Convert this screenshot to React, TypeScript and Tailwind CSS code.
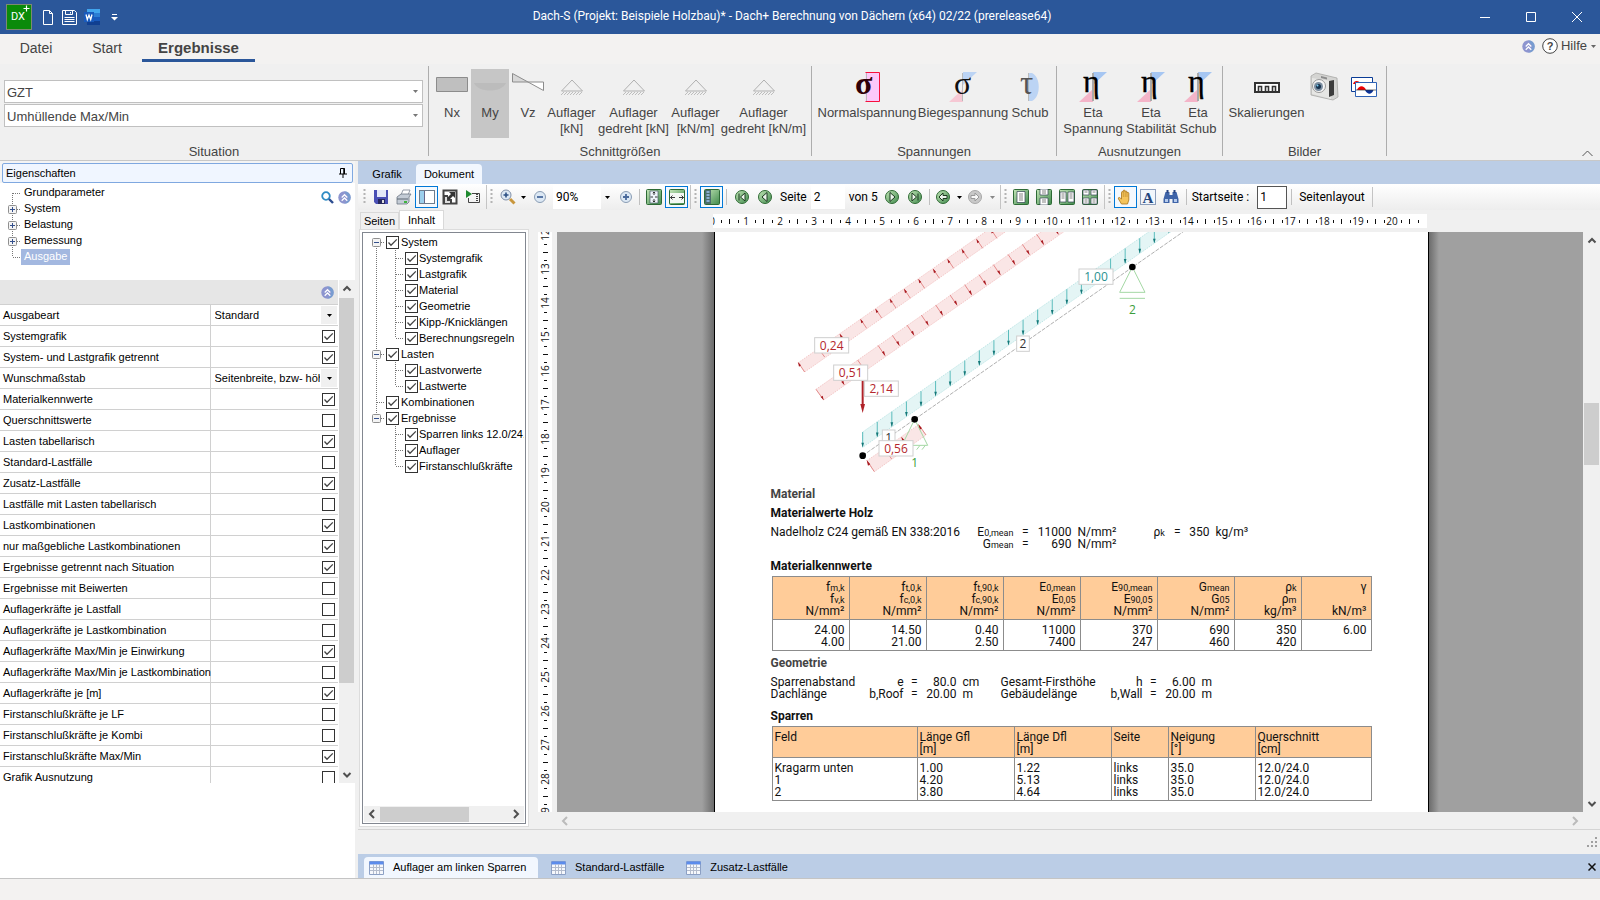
import { Fragment, ReactNode, useState } from 'react';
import clsx from 'clsx';

const arial = "font-['Liberation_Sans',Arial,sans-serif]";
const roboto = 'font-[Roboto,sans-serif]';

/* ---------- shared bits ---------- */

function Check({ id, on, className }: { id: string; on: boolean; className?: string }) {
  const [checked, setChecked] = useState(on);
  return (
    <span className={clsx('relative block h-[13px] w-[13px] shrink-0', className)}>
      <input
        id={id}
        type="checkbox"
        checked={checked}
        onChange={(e) => setChecked(e.target.checked)}
        className="block h-[13px] w-[13px] appearance-none border border-[#333] bg-white"
      />
      {checked && (
        <svg viewBox="0 0 13 13" className="pointer-events-none absolute inset-0 h-[13px] w-[13px]">
          <path d="M2.5 6.5 5 9.2 10.8 3.4" fill="none" stroke="#444" strokeWidth="1.3" />
        </svg>
      )}
    </span>
  );
}

function Collapse({ size = 13 }: { size?: number }) {
  return (
    <svg width={size} height={size} viewBox="0 0 14 14">
      <circle cx="7" cy="7" r="6.7" fill="#8d95cf" />
      <path d="M7 .3A6.7 6.7 0 0 1 7 13.7 10 10 0 0 0 11 7Z" fill="#6f9fd0" opacity=".7" />
      <path d="M4 7 7 4l3 3M4 10.5l3-3 3 3" fill="none" stroke="#fff" strokeWidth="1.3" />
    </svg>
  );
}

function Caret({ className }: { className?: string }) {
  return (
    <svg width="5" height="3" viewBox="0 0 5 3" className={className}>
      <path d="M0 0h5L2.5 3Z" fill="currentColor" />
    </svg>
  );
}

function Chevron({ dir, className }: { dir: 'up' | 'down' | 'left' | 'right'; className?: string }) {
  const paths = {
    up: 'M1.5 6.5 5 3l3.5 3.5',
    down: 'M1.5 3 5 6.5 8.5 3',
    left: 'M7 1 3 5l4 4',
    right: 'M3 1l4 4-4 4',
  };
  return (
    <svg width="10" height="10" viewBox="0 0 10 10" className={className}>
      <path d={paths[dir]} fill="none" stroke="currentColor" strokeWidth="2" />
    </svg>
  );
}

/* ---------- title bar ---------- */

function TitleBar() {
  return (
    <header className={clsx('relative flex h-[34px] shrink-0 items-center bg-[#2b579a] text-white', roboto)}>
      <svg width="26" height="26" viewBox="0 0 26 26" className="ml-1.5 shrink-0">
        <rect x=".5" y=".5" width="25" height="25" fill="#0a8a0a" stroke="#7d8a72" />
        <text x="5" y="16" fontSize="11" fill="#fff" fontFamily="Roboto, sans-serif">DX</text>
        <path d="M20.5 1.5v6M17.500 4.500h6" stroke="#fff" strokeWidth="1.2" />
      </svg>
      <button aria-label="Neu" className="ml-[10px]">
        <svg width="12" height="15" viewBox="0 0 12 15" fill="none" stroke="#fff">
          <path d="M1.500 .5h6l3 3v11h-9ZM7.500 .5v3h3" />
        </svg>
      </button>
      <button aria-label="Speichern" className="ml-2">
        <svg width="15" height="15" viewBox="0 0 15 15" fill="none" stroke="#fff">
          <path d="M.5.5h12l2 2v12H.5ZM3.500.5v4h7v-4M8.500 2v1.500M2.500 7.500h10M2.500 9.500h10M2.500 11.500h10" />
        </svg>
      </button>
      <button aria-label="Word" className="ml-[7px]">
        <svg width="16" height="16" viewBox="0 0 16 16">
          <rect x="3" width="13" height="4" fill="#41a5ee" />
          <rect x="3" y="4" width="13" height="4" fill="#2b7cd3" />
          <rect x="3" y="8" width="13" height="4" fill="#185abd" />
          <rect x="3" y="12" width="13" height="4" fill="#103f91" />
          <rect y="3" width="10" height="10" fill="#185abd" />
          <path d="m2 5.500 1.300 5L5 6l1.700 4.500L8 5.500" fill="none" stroke="#fff" strokeWidth="1.300" />
        </svg>
      </button>
      <button aria-label="Anpassen" className="ml-[11px]">
        <svg width="7" height="7" viewBox="0 0 7 7" fill="#fff">
          <path d="M1 0h5v1H1ZM0 3h7L3.500 6.500Z" />
        </svg>
      </button>
      <h1 className="flex-1 pb-[2px] pl-[4px] text-center text-[12px]">
        Dach-S (Projekt: Beispiele Holzbau)* - Dach+ Berechnung von Dächern (x64) 02/22 (prerelease64)
      </h1>
      <button aria-label="Minimieren" className="flex w-[46px] justify-center">
        <svg width="10" height="10" viewBox="0 0 10 10"><path d="M0 5.500h10" stroke="#fff" /></svg>
      </button>
      <button aria-label="Maximieren" className="flex w-[46px] justify-center">
        <svg width="10" height="10" viewBox="0 0 10 10"><path d="M.5.5h9v9h-9Z" fill="none" stroke="#fff" /></svg>
      </button>
      <button aria-label="Schließen" className="flex w-[46px] justify-center">
        <svg width="10" height="10" viewBox="0 0 10 10"><path d="m0 0 10 10M10 0 0 10" stroke="#fff" /></svg>
      </button>
    </header>
  );
}

/* ---------- ribbon ---------- */

function RibbonButton({ icon, lines, className, active }: { icon: ReactNode; lines: string[]; className: string; active?: boolean }) {
  return (
    <button className={clsx('flex h-[69px] shrink-0 flex-col items-center', className, active && 'bg-[#c6c6c6]')}>
      <span className="flex h-[36px] items-center justify-center">{icon}</span>
      {lines.map((l) => (
        <span key={l} className="text-[13px] leading-4 whitespace-nowrap">{l}</span>
      ))}
    </button>
  );
}

function Group({ title, className, children }: { title: string; className: string; children: ReactNode }) {
  return (
    <section className={clsx('flex h-[90px] shrink-0 flex-col border-r border-[#adadad]', className)}>
      <div className="flex flex-1 items-start pt-[3px]">{children}</div>
      <h2 className="text-center text-[13px] leading-2">{title}</h2>
    </section>
  );
}

const Support = () => (
  <svg width="24" height="20" viewBox="0 0 24 20" fill="none" stroke="#b0b0b0">
    <path d="M12 3 1.500 14h21Z" />
    <path d="m1 18 3-3m0 3 3-3m0 3 3-3m0 3 3-3m0 3 3-3m0 3 3-3m0 3 3-3" strokeWidth=".8" />
  </svg>
);

const Sigma = ({ variant }: { variant: 'normal' | 'bending' }) => (
  <svg width="30" height="30" viewBox="0 0 30 30" className="overflow-visible">
    {variant === 'normal' ? (
      <>
        <path d="M13.500.5h14v29h-14" fill="#fcc8fa" />
        <path d="M13.500.5h14v29h-14" fill="none" stroke="#f8103c" />
      </>
    ) : (
      <>
        <path d="M15 0h14L15 13Z" fill="#bcd4f4" />
        <path d="M15 30H1l14-13Z" fill="#f6c8d4" />
      </>
    )}
    <path d="M14.500 1v28" stroke="#bbb" />
    <text
      x={variant === 'normal' ? 3 : 6}
      y="22"
      fontSize="32"
      fontFamily="Liberation Serif, serif"
      fontWeight={variant === 'normal' ? 700 : 400}
      fill={variant === 'normal' ? '#300008' : '#111'}
    >
      σ
    </text>
  </svg>
);

const Tau = () => (
  <svg width="22" height="30" viewBox="0 0 22 30" className="overflow-visible">
    <path d="M10 1h3c9 4 9 24 0 28h-3Z" fill="#bcd4f4" />
    <path d="M9.500 1v28" stroke="#bbb" />
    <text x="1" y="22" fontSize="33" fontFamily="Liberation Serif, serif" fill="#555">τ</text>
  </svg>
);

const Eta = () => (
  <svg width="30" height="30" viewBox="0 0 30 30" className="overflow-visible">
    <path d="M15 0h14L15 13Z" fill="#a6c6f2" />
    <path d="M15 30H1l14-13Z" fill="#f4b4c8" />
    <path d="M15 1v28" stroke="#aaa" strokeWidth="2" />
    <text x="5" y="20" fontSize="32" fontFamily="Liberation Serif, serif" fill="#000" stroke="#000" strokeWidth=".3">η</text>
  </svg>
);

const Camera = () => (
  <svg width="32" height="30" viewBox="0 0 32 30">
    <path d="M2 4 7 1l21 5 1 19-5 3L2 23Z" fill="#d4d4d2" stroke="#a8a8a6" strokeWidth=".8" />
    <path d="M3 6l19 3v18L3 22Z" fill="#e6e6e4" />
    <path d="m20 9 5-1v15l-5 2Z" fill="#3c3c3c" />
    <circle cx="10" cy="14" r="6.500" fill="#f6f6f6" stroke="#999" />
    <circle cx="9.500" cy="14.500" r="4.500" fill="#7c8ea0" />
    <circle cx="9.500" cy="14.500" r="2.500" fill="#16324e" />
    <circle cx="8.500" cy="13.500" r="1" fill="#7fd0f4" />
    <path d="m12 4 6 1.500v2L12 6Z" fill="#8c8c8c" />
  </svg>
);

function Ribbon() {
  return (
    <div className={clsx('shrink-0 bg-[#f0f0f0] text-[#444]', arial)}>
      <div className="flex h-[30px] items-start bg-[#f3f2f1]">
        <nav className="flex h-7 text-[14px]">
          <a href="#datei" className="flex w-[72px] items-center justify-center">Datei</a>
          <a href="#start" className="flex w-[70px] items-center justify-center">Start</a>
          <a href="#ergebnisse" className="flex w-[113px] items-center justify-center border-b-[3px] border-[#2b579a] pt-[3px] text-[15px] font-bold">
            Ergebnisse
          </a>
        </nav>
        <div className="ml-auto flex h-6 items-center pr-1 text-[13px]">
          <Collapse />
          <button className="ml-[7px] flex items-center gap-[3px]">
            <svg width="16" height="16" viewBox="0 0 16 16">
              <circle cx="8" cy="8" r="7.300" fill="#fff" stroke="#444" />
              <text x="8" y="12" fontSize="11" fontWeight="700" textAnchor="middle" fill="#444" fontFamily="Liberation Sans">?</text>
            </svg>
            Hilfe
            <Caret className="ml-px text-[#666]" />
          </button>
        </div>
      </div>
      <div className="relative flex h-[97px] border-b border-[#c8c8c8] pt-[2px]">
        <Group title="Situation" className="w-[429px]">
          <div className="flex w-full flex-col gap-px pt-[11px] pr-[5px] pl-1">
            {['GZT', 'Umhüllende Max/Min'].map((v) => (
              <div key={v} className="relative">
                <select
                  aria-label={v}
                  defaultValue={v}
                  className="block h-[23px] w-full appearance-none border border-[#c0c0c0] bg-white px-[2px] pt-[2px] text-[13px] outline-none"
                >
                  <option>{v}</option>
                </select>
                <Caret className="pointer-events-none absolute top-[10px] right-[5px] text-[#777]" />
              </div>
            ))}
          </div>
        </Group>
        <Group title="Schnittgrößen" className="w-[383px]">
          <RibbonButton
            className="ml-1 w-[38px]"
            lines={['Nx']}
            icon={
              <svg width="32" height="16" viewBox="0 0 32 16" className="mb-1">
                <path d="M.5.5h31v14H.5Z" fill="#bfbfbf" stroke="#8c8c8c" />
              </svg>
            }
          />
          <RibbonButton
            className="w-[38px]"
            active
            lines={['My']}
            icon={
              <svg width="32" height="10" viewBox="0 0 32 10">
                <path d="M0 1h32c-4 10-28 10-32 0Z" fill="#bcbcbc" />
              </svg>
            }
          />
          <RibbonButton
            className="w-[38px]"
            lines={['Vz']}
            icon={
              <svg width="32" height="18" viewBox="0 0 32 18" className="mb-[10px]">
                <path d="M.5.5v8.500H16Z" fill="#d8d8d8" />
                <path d="M16 9h15.500v8.500Z" fill="#fff" />
                <path d="M.5.5 31.500 17.500V9H.5Z" fill="none" stroke="#8c8c8c" />
              </svg>
            }
          />
          <RibbonButton className="w-[49px]" lines={['Auflager', '[kN]']} icon={<Support />} />
          <RibbonButton className="w-[75px]" lines={['Auflager', 'gedreht [kN]']} icon={<Support />} />
          <RibbonButton className="w-[49px]" lines={['Auflager', '[kN/m]']} icon={<Support />} />
          <RibbonButton className="w-[87px]" lines={['Auflager', 'gedreht [kN/m]']} icon={<Support />} />
        </Group>
        <Group title="Spannungen" className="w-[245px]">
          <RibbonButton className="ml-[6px] w-[98px]" lines={['Normalspannung']} icon={<Sigma variant="normal" />} />
          <RibbonButton className="w-[94px]" lines={['Biegespannung']} icon={<Sigma variant="bending" />} />
          <RibbonButton className="w-[40px]" lines={['Schub']} icon={<Tau />} />
        </Group>
        <Group title="Ausnutzungen" className="w-[166px]">
          <RibbonButton className="ml-[5px] w-[62px]" lines={['Eta', 'Spannung']} icon={<Eta />} />
          <RibbonButton className="w-[54px]" lines={['Eta', 'Stabilität']} icon={<Eta />} />
          <RibbonButton className="w-[40px]" lines={['Eta', 'Schub']} icon={<Eta />} />
        </Group>
        <Group title="Bilder" className="w-[164px]">
          <RibbonButton
            className="ml-[5px] w-[77px]"
            lines={['Skalierungen']}
            icon={
              <svg width="26" height="11" viewBox="0 0 26 11">
                <path d="M1 1h24v9H1Z" fill="#fff" stroke="#333" strokeWidth="2" />
                <path d="M4.500 10V4.500h3V10M11.500 10V4.500h3V10M18.500 10V4.500h3V10" fill="none" stroke="#333" strokeWidth="1.600" />
              </svg>
            }
          />
          <RibbonButton className="w-[40px]" lines={[]} icon={<Camera />} />
          <RibbonButton
            className="w-[38px]"
            lines={[]}
            icon={
              <svg width="26" height="20" viewBox="0 0 26 20">
                <path d="M.5.5h21v14H.5Z" fill="#fff" stroke="#0a3c96" />
                <path d="M2 7c1-4 6-4 8 0Z" fill="#e00" />
                <path d="M4.500 5.500h21v14h-21Z" fill="#fff" stroke="#2f62b4" />
                <path d="M6 13c2-5 7-5 9 0Z" fill="#e00" />
                <path d="M14 13h8.500c-2 5-6 5-8.500 0Z" fill="#0a3296" />
                <path d="M5 13h20" stroke="#333" strokeWidth=".7" />
              </svg>
            }
          />
        </Group>
        <button aria-label="Menüband reduzieren" className="mt-auto mr-[7px] mb-[3px] ml-auto">
          <svg width="11" height="7" viewBox="0 0 11 7"><path d="m.5 6 5-5 5 5" fill="none" stroke="#555" /></svg>
        </button>
      </div>
    </div>
  );
}

/* ---------- trees ---------- */

function Gutter({ up, down, across, box, wide }: { up?: boolean; down?: boolean; across?: boolean; box?: '+' | '-'; wide?: boolean }) {
  return (
    <svg width={wide ? 19 : 16} height="16" viewBox={wide ? '0 0 19 16' : '0 0 16 16'} className="shrink-0">
      <g stroke="#777" strokeDasharray="1 1">
        {up && <path d="M8.500 0v8" />}
        {down && <path d="M8.500 8v8" />}
        {across && <path d="M9 8.500h7" />}
      </g>
      {box && (
        <>
          <rect x="4.500" y="4.500" width="8" height="8" rx="1" fill="#f4f4f4" stroke="#8f8f8f" />
          <path d={box === '+' ? 'M6 8.500h5M8.500 6v5' : 'M6 8.500h5'} stroke="#34508c" />
        </>
      )}
    </svg>
  );
}

const sections = ['Grundparameter', 'System', 'Belastung', 'Bemessung', 'Ausgabe'];

const contents = [
  { name: 'System', items: ['Systemgrafik', 'Lastgrafik', 'Material', 'Geometrie', 'Kipp-/Knicklängen', 'Berechnungsregeln'] },
  { name: 'Lasten', items: ['Lastvorwerte', 'Lastwerte'] },
  { name: 'Kombinationen', items: [] },
  { name: 'Ergebnisse', items: ['Sparren links 12.0/24.', 'Auflager', 'Firstanschlußkräfte'] },
];

/* ---------- properties ---------- */

const props: [string, boolean | string][] = [
  ['Ausgabeart', 'Standard'],
  ['Systemgrafik', true],
  ['System- und Lastgrafik getrennt', true],
  ['Wunschmaßstab', 'Seitenbreite, bzw- höh'],
  ['Materialkennwerte', true],
  ['Querschnittswerte', false],
  ['Lasten tabellarisch', true],
  ['Standard-Lastfälle', false],
  ['Zusatz-Lastfälle', true],
  ['Lastfälle mit Lasten tabellarisch', false],
  ['Lastkombinationen', true],
  ['nur maßgebliche Lastkombinationen', true],
  ['Ergebnisse getrennt nach Situation', true],
  ['Ergebnisse mit Beiwerten', false],
  ['Auflagerkräfte je Lastfall', false],
  ['Auflagerkräfte je Lastkombination', false],
  ['Auflagerkräfte Max/Min je Einwirkung', true],
  ['Auflagerkräfte Max/Min je Lastkombination', false],
  ['Auflagerkräfte je [m]', true],
  ['Firstanschlußkräfte je LF', false],
  ['Firstanschlußkräfte je Kombi', false],
  ['Firstanschlußkräfte Max/Min', true],
  ['Grafik Ausnutzung', false],
];

function Properties() {
  return (
    <aside className={clsx('flex w-[355px] shrink-0 flex-col bg-white text-[11px] text-black', arial)}>
      <div className="bg-[#f4f4f4] px-[2px] pt-[2px]">
        <div className="flex h-5 items-center rounded-xs border border-[#7fa8e0] bg-[#f0f6ff] px-[3px]">
          <h2>Eigenschaften</h2>
          <button aria-label="Anheften" className="mr-[2px] ml-auto">
            <svg width="8" height="10" viewBox="0 0 8 10" fill="none" stroke="#000">
              <path d="M1.500 6V.5h4V6M5.500.5V6M0 6h8M4 6v4" />
              <path d="M5 1v5" strokeWidth="1.500" />
            </svg>
          </button>
        </div>
      </div>
      <div className="flex h-[97px] shrink-0 items-start pt-[2px]">
        <ul className="pl-1">
          {sections.map((s, i) => (
            <li key={s} className="flex h-4 items-center">
              <Gutter up={i > 0} down={i < 4} across box={i > 0 && i < 4 ? '+' : undefined} />
              <span className={clsx('ml-px h-4 px-[3px] leading-[15px]', i === 4 && 'bg-[#a3b8e0] text-white')}>{s}</span>
            </li>
          ))}
        </ul>
        <div className="mt-[6px] mr-[4px] ml-auto flex gap-1">
          <button aria-label="Suchen">
            <svg width="13" height="13" viewBox="0 0 13 13" fill="none">
              <circle cx="5" cy="5" r="3.800" stroke="#2f8cc4" strokeWidth="1.800" />
              <path d="m8 8 4 4" stroke="#2c4c90" strokeWidth="2.400" />
            </svg>
          </button>
          <button aria-label="Zuklappen"><Collapse /></button>
        </div>
      </div>
      <div className="flex h-[503px] shrink-0 overflow-hidden">
        <div className="min-w-0 flex-1">
          <div className="flex h-6 items-center justify-end bg-[#e6e6e6] pr-1">
            <Collapse />
          </div>
          <table className="w-full table-fixed border-collapse">
            <tbody>
              {props.map(([name, value]) => (
                <tr key={name} className="h-[21px] border-t border-[#d0d0d0]">
                  <td className="w-[210px] border-r border-[#d0d0d0] p-0 pl-[3px] leading-5 whitespace-nowrap">
                    <label htmlFor={name}>{name}</label>
                  </td>
                  <td className="p-0 leading-5">
                    {typeof value === 'string' ? (
                      <div className="relative">
                        <select
                          id={name}
                          defaultValue={value}
                          className="block h-5 w-full appearance-none overflow-hidden bg-white pr-[18px] pl-1 outline-none"
                        >
                          <option>{value}</option>
                        </select>
                        <span className="pointer-events-none absolute inset-y-px right-px flex w-4 items-center justify-center bg-[#f0f0f0]">
                          <Caret />
                        </span>
                      </div>
                    ) : (
                      <Check id={name} on={value} className="mr-[3px] ml-auto" />
                    )}
                  </td>
                </tr>
              ))}
            </tbody>
          </table>
        </div>
        <div className="ml-px flex w-4 shrink-0 flex-col items-center bg-[#f0f0f0] text-[#505050]">
          <Chevron dir="up" className="my-[4px] mr-px shrink-0" />
          <div className="mr-px h-[385px] w-[15px] bg-[#cdcdcd]" />
          <Chevron dir="down" className="mt-auto mr-px mb-[3px] shrink-0" />
        </div>
      </div>
    </aside>
  );
}

/* ---------- toolbar ---------- */

const Grip = () => (
  <svg width="3" height="16" viewBox="0 0 3 16" className="mx-[3px] shrink-0">
    <path d="M1.500 0v16" stroke="#b4b4b4" strokeWidth="2" strokeDasharray="2 2" />
  </svg>
);

const Sep = () => <span className="mx-[2px] h-4 w-px shrink-0 bg-[#c0c0c0]" />;
const End = () => <span className="ml-[2px] h-6 w-px shrink-0 bg-[#c4c4c4]" />;

function Tool({ name, active, children }: { name: string; active?: boolean; children: ReactNode }) {
  return (
    <button
      aria-label={name}
      className={clsx(
        'flex h-[22px] w-[23px] shrink-0 items-center justify-center border',
        active ? 'border-[#0078d7] bg-[#f4f9fe]' : 'border-transparent',
      )}
    >
      <svg width="16" height="16" viewBox="0 0 16 16">{children}</svg>
    </button>
  );
}

const GreenSquare = () => <rect x=".5" y=".5" width="15" height="15" rx="1" fill="url(#green)" stroke="#2d6a35" />;
const Round = ({ d, gray }: { d: string; gray?: boolean }) => (
  <>
    <circle cx="8" cy="8" r="6.500" fill={gray ? '#c8c8c8' : 'url(#green)'} stroke={gray ? '#a8a8a8' : '#2f6a34'} />
    <path d={d} fill="#fff" fillOpacity=".85" stroke={gray ? '#999' : '#1d3a20'} />
  </>
);
const Lens = ({ plus }: { plus?: boolean }) => (
  <>
    <circle cx="8" cy="8" r="5.500" fill="#dce8f4" stroke="#8a9db4" />
    <path d={plus ? 'M5 8h6M8 5v6' : 'M5 8h6'} stroke="#4a6a9c" strokeWidth="1.800" />
  </>
);

function Toolbar() {
  return (
    <div className={clsx('flex h-[26px] shrink-0 items-center overflow-hidden bg-linear-to-b from-white to-[#ededed] pl-[2px] text-[12px] whitespace-nowrap text-black', roboto)}>
      <svg className="absolute h-0 w-0">
        <defs>
          <linearGradient id="green" x1="0" y1="0" x2="1" y2="1">
            <stop offset="0" stopColor="#c4e6b8" />
            <stop offset="1" stopColor="#3f8a4c" />
          </linearGradient>
        </defs>
      </svg>
      <Grip />
      <Tool name="Speichern">
        <path d="M1 1h14v14H3l-2-2Z" fill="#4a4fb4" />
        <path d="M4 1h9v7H4Z" fill="#e4e8f8" />
        <path d="M5 10h7v5H5Z" fill="#26285e" />
        <path d="M9 11h2v3H9Z" fill="#ddd" />
      </Tool>
      <Tool name="Drucken">
        <path d="M5 6 7 1h7l-2 5Z" fill="#fff" stroke="#7d8794" strokeWidth=".8" />
        <path d="m1 8 4-3h10l-2 3v5l-2 2H1Z" fill="#c4ccd6" stroke="#6c7684" strokeWidth=".8" />
        <path d="M1 10h11" stroke="#5b6470" />
        <path d="M8 12h3v2H8Z" fill="#3fb43f" />
      </Tool>
      <Tool name="Navigation" active>
        <rect x=".5" y="1.500" width="15" height="13" fill="#fff" stroke="#6f7d8c" />
        <rect x="1" y="2" width="4" height="12" fill="#9ccfec" />
        <path d="M5.500 2v12" stroke="#668" />
      </Tool>
      <Tool name="Vollbild">
        <path d="M1.500 1.500h13v13h-13Z" fill="#fff" stroke="#444" strokeWidth="2" />
        <path d="M1 6h5v4h4v5H1Z" fill="#444" />
        <path d="M3 8h2v4h3v2H3Z" fill="#ddd" />
        <path d="M7 3h6v6l-2-2-4 4-2-2 4-4Z" fill="#333" />
      </Tool>
      <Tool name="Export">
        <path d="m1 1 6 4-6 4Z" fill="#1f8a2f" />
        <path d="M3.500 9v4.500H7M7 4.500h7.500v9H7" fill="none" stroke="#444" />
        <path d="M12 5v8" stroke="#444" strokeWidth="2" strokeDasharray="1 1" />
      </Tool>
      <End />
      <Grip />
      <Tool name="Vergrößern">
        <circle cx="6" cy="6" r="5" fill="#dce8f4" stroke="#8090a8" />
        <path d="M3.500 6h5M6 3.500v5" stroke="#2b4f84" strokeWidth="1.600" />
        <path d="m10 10 4.500 4.500" stroke="#c8963c" strokeWidth="3" />
      </Tool>
      <Caret className="mx-[2px] shrink-0" />
      <Tool name="Verkleinern"><Lens /></Tool>
      <input aria-label="Zoom" defaultValue="90%" className="ml-[2px] h-6 w-[48px] shrink-0 bg-white pl-[3px] outline-none" />
      <Caret className="mx-1 shrink-0" />
      <Tool name="Plus"><Lens plus /></Tool>
      <span className="mx-[2px] h-4 w-px shrink-0 bg-[#c0c0c0]" />
      <Tool name="Ganze Seite">
        <GreenSquare />
        <rect x="4" y="2" width="8" height="12" fill="#eef4fa" stroke="#345" strokeWidth=".6" />
        <path d="M8 3v3M8 10v3M4.500 8H7m2 0h2.500M6.800 4.200 8 3l1.200 1.200M6.800 11.800 8 13l1.200-1.200" fill="none" stroke="#222" strokeWidth=".9" />
      </Tool>
      <Tool name="Seitenbreite" active>
        <GreenSquare />
        <rect x="1" y="4" width="14" height="10" fill="#f4f8f4" />
        <path d="M1.500 8.500H6m4 0h4.500M3.500 6.500l-2 2 2 2m9-4 2 2-2 2" fill="none" stroke="#222" strokeWidth=".9" />
      </Tool>
      <End />
      <Grip />
      <Tool name="Miniaturen" active>
        <GreenSquare />
        <path d="M1 1h6v14H1Z" fill="#4c6c6c" />
        <path d="M2.500 3h3M2.500 6h3M2.500 9h3M2.500 12h3" stroke="#9cc4f0" strokeWidth="1.500" />
      </Tool>
      <span className="mx-[3px] h-4 w-px shrink-0 bg-[#c0c0c0]" />
      <Tool name="Erste Seite"><Round d="M5 4.500v7M11 4v8L6.500 8Z" /></Tool>
      <Tool name="Vorige Seite"><Round d="M10 3.500v9L5 8Z" /></Tool>
      <label htmlFor="seite" className="ml-1">Seite</label>
      <input id="seite" defaultValue="2" className="ml-1 h-6 w-[34px] shrink-0 bg-white pl-[3px] outline-none" />
      <span className="mr-[3px] ml-1">von 5</span>
      <Tool name="Nächste Seite"><Round d="M6 3.500v9L11 8Z" /></Tool>
      <Tool name="Letzte Seite"><Round d="M5 4v8l4.500-4ZM11 4.500v7" /></Tool>
      <Sep />
      <Tool name="Zurück"><Round d="M4 8l4-4v2.500h4v3H8V12Z" /></Tool>
      <Caret className="mx-[2px] shrink-0" />
      <Tool name="Vor"><Round gray d="M12 8 8 4v2.500H4v3h4V12Z" /></Tool>
      <Caret className="ml-[3px] shrink-0 text-[#888]" />
      <span className="w-[3px]" />
      <End />
      <Grip />
      <Tool name="Einzelseite">
        <GreenSquare />
        <path d="M4 2.500h8v11H4Z" fill="#fff" stroke="#345" strokeWidth=".7" />
        <path d="M6 5h4M6 7h4M6 9h4M6 11h4" stroke="#666" strokeWidth=".8" />
      </Tool>
      <Tool name="Fortlaufend">
        <GreenSquare />
        <path d="M4 0h8v6H4ZM4 9h8v7H4Z" fill="#fff" stroke="#345" strokeWidth=".7" />
        <path d="M6 2h4M6 4h4M6 11h4M6 13h4" stroke="#666" strokeWidth=".8" />
      </Tool>
      <Tool name="Doppelseite">
        <GreenSquare />
        <path d="M1 3h6v10H1ZM9 3h6v10H9Z" fill="#fff" stroke="#345" strokeWidth=".7" />
        <path d="M2.500 5h3m-3 2h3m-3 2h3m5-4h3m-3 2h3m-3 2h3" stroke="#666" strokeWidth=".8" />
      </Tool>
      <Tool name="Doppelseite fortlaufend">
        <GreenSquare />
        <path d="M1 1h6v5H1ZM9 1h6v5H9ZM1 9h6v6H1ZM9 9h6v6H9Z" fill="#fff" stroke="#345" strokeWidth=".7" />
        <path d="M2.500 3h3m5 0h3m-11 8h3m-3 2h3m5-2h3m-3 2h3" stroke="#666" strokeWidth=".8" />
      </Tool>
      <End />
      <Grip />
      <Tool name="Hand" active>
        <path
          d="M4.500 15 1.500 10c-.7-1.500.8-2.200 1.700-1L4.500 10V3.500c0-1.300 1.700-1.300 1.700 0V2c0-1.300 1.800-1.300 1.800 0v.7c.2-1.200 1.900-1 1.900.3V4c.3-1 1.900-.8 1.900.4V11l-1.300 4Z"
          fill="#f4c45c"
          stroke="#a87418"
          strokeWidth=".8"
        />
        <path d="M6.300 4v4M8.200 3v5M10 4v4" stroke="#b88424" strokeWidth=".6" />
      </Tool>
      <Tool name="Textauswahl">
        <path d="M.5.5h15v15H.5Z" fill="#f2f6fb" stroke="#24457c" strokeDasharray="1 1" />
        <text x="2.500" y="13.500" fontSize="15" fontWeight="700" fontFamily="Liberation Serif, serif" fill="#24457c">A</text>
      </Tool>
      <Tool name="Suchen">
        <path d="M2.500 3h4v3h3V3h4l2 7v4h-6v-4h-3v4h-6v-4Z" fill="#3f64a8" />
        <path d="M3.500 1h2v3h-2ZM10.500 1h2v3h-2Z" fill="#2a4784" />
        <path d="M2 10h3v3H2ZM11 10h3v3h-3Z" fill="#b4caec" />
      </Tool>
      <span className="mr-[5px] ml-[3px] h-4 w-px shrink-0 bg-[#c0c0c0]" />
      <label htmlFor="startseite">Startseite :</label>
      <input id="startseite" defaultValue="1" className="ml-2 h-[23px] w-[30px] shrink-0 border border-[#555] bg-white pl-[2px] outline-none" />
      <span className="mr-[7px] ml-1 h-4 w-px shrink-0 bg-[#c0c0c0]" />
      <button>Seitenlayout</button>
      <span className="ml-[7px] h-5 w-px shrink-0 bg-[#c4c4c4]" />
    </div>
  );
}

/* ---------- contents pane ---------- */

function Contents() {
  return (
    <div className={clsx('flex w-[173px] shrink-0 flex-col pr-[2px] pb-[2px] pl-px text-[11px]', arial)}>
      <div className="flex h-[19px] items-end pl-px">
        <button className="h-[17px] w-[39px] border border-b-0 border-[#d9d9d9] bg-[#f0f0f0] leading-[15px]">Seiten</button>
        <button className="h-[19px] w-[45px] border border-b-0 border-[#d9d9d9] bg-white leading-[15px]">Inhalt</button>
      </div>
      <div className="flex min-h-0 flex-1 flex-col border border-[#dcdcdc] bg-white p-[2px]">
        <div className="flex min-h-0 flex-1 flex-col border border-[#828790] p-px">
          <ul className="min-h-0 flex-1 overflow-hidden pl-1">
            {contents.map((c, i) => (
              <Fragment key={c.name}>
                <li className="flex h-4 items-center">
                  <Gutter up={i > 0} down={i < 3} across box={c.items.length ? '-' : undefined} />
                  <Check id={`c-${c.name}`} on className="ml-[2px]" />
                  <label htmlFor={`c-${c.name}`} className="ml-[2px] leading-4">{c.name}</label>
                </li>
                {c.items.map((item, k) => (
                  <li key={item} className="flex h-4 items-center">
                    <Gutter wide up={i < 3} down={i < 3} />
                    <Gutter up down={k < c.items.length - 1} across />
                    <Check id={`c-${item}`} on className="ml-[2px]" />
                    <label htmlFor={`c-${item}`} className="ml-px leading-4 whitespace-nowrap">{item}</label>
                  </li>
                ))}
              </Fragment>
            ))}
          </ul>
          <div className="flex h-4 items-center bg-[#f0f0f0] text-[#505050]">
            <Chevron dir="left" className="mx-[3px]" />
            <div className="h-[15px] w-[89px] bg-[#cdcdcd]" />
            <Chevron dir="right" className="mr-[3px] ml-auto" />
          </div>
        </div>
      </div>
    </div>
  );
}

/* ---------- rulers ---------- */

const CM = 34;

function HRuler() {
  return (
    <svg width="714" height="14" viewBox="0 0 714 14" className="shrink-0 bg-white">
      {Array.from({ length: 21 }, (_, n) => (
        <g key={n}>
          <text x={n * CM - 1} y="11" fontSize="10" textAnchor="middle" fontFamily="Open Sans, sans-serif" fill="#111">{n}</text>
          <path d={`M${n * CM + 8.5} 6v3M${n * CM + 16.5} 5v5M${n * CM + 25.5} 6v3`} stroke="#111" />
        </g>
      ))}
    </svg>
  );
}

function VRuler() {
  return (
    <svg width="14" height="580" viewBox="0 0 14 580" className="mt-1 ml-px shrink-0 bg-white">
      {Array.from({ length: 18 }, (_, k) => {
        const y = 3 + k * CM;
        return (
          <g key={k}>
            <text transform={`translate(11 ${y}) rotate(-90)`} fontSize="10" textAnchor="middle" fontFamily="Open Sans, sans-serif" fill="#111">
              {12 + k}
            </text>
            <path d={`M6 ${y + 9.5}h3M5 ${y + 17.5}h5M6 ${y + 25.5}h3`} stroke="#111" />
          </g>
        );
      })}
    </svg>
  );
}

/* ---------- roof drawing ---------- */

const upliftX = [482, 527, 570, 613, 656, 700, 743, 786, 830, 873];
const windX = [555, 598, 642, 685, 728, 771, 815, 858, 901, 945, 988, 1031, 1075, 1118];

function Tag({ x, y, w, text, color }: { x: number; y: number; w: number; text: string; color: string }) {
  return (
    <g>
      <rect x={x} y={y} width={w} height="46" fill="#fff" stroke="#cfcfcf" strokeWidth="3" />
      <text x={x + w / 2} y={y + 36} fontSize="36" textAnchor="middle" fill={color} fontFamily="Open Sans, sans-serif">{text}</text>
    </g>
  );
}

function RoofDrawing() {
  return (
    <svg width="713" height="250" viewBox="45 66 2139 750" className="block shrink-0">
      <g fill="#fae6e6" stroke="#eeb4b4" strokeWidth="2" strokeDasharray="4 3">
        <path d="M295 458 1000-35l20 28L314 486Z" />
        <path d="M348 538 1200-58l22 32L371 570Z" />
        <path d="m501 752 155-108 22 31-155 110Z" />
      </g>
      <path d="M488 666 1600-112v46L488 712Z" fill="#e4f5f5" stroke="#a8dcdc" strokeWidth="2" strokeDasharray="4 3" />
      <path d="M488 737 1480 44" stroke="#b0b0b0" strokeWidth="3" strokeDasharray="12 4" />
      <g stroke="#e48c8c" strokeWidth="3">
        <path d="m295 458 19 28M420 372l18 26M355 415l19 26M348 538l23 32M473 450l22 32M412 494l21 30M501 752l22 33M656 644l22 31M605 682l22 31M553 716l22 31" />
        {upliftX.map((x) => {
          const y = 328 - (x - 482) * 0.69;
          return <path key={x} d={`M${x} ${y}l18 27`} />;
        })}
        {windX.map((x) => {
          const y = 437 - (x - 555) * 0.7;
          return <path key={x} d={`M${x} ${y}l-21 -31`} />;
        })}
      </g>
      <g fill="#a81a20">
        <path d="m294 457 9 9-6 4ZM419 371l9 9-6 4ZM371 570l-9-9 6-4ZM433 525l-9-9 6-4ZM500 751l11 12-7 4ZM655 643l11 12-7 4ZM604 681l9 9-6 4Z" />
        {upliftX.map((x) => {
          const y = 328 - (x - 482) * 0.69;
          return <path key={x} d={`M${x - 1} ${y - 1}l9 9-6 4Z`} />;
        })}
        {windX.map((x) => {
          const y = 437 - (x - 555) * 0.7;
          return <path key={x} d={`M${x + 1} ${y + 1}l-10 -11 6 -4Z`} />;
        })}
      </g>
      {Array.from({ length: 22 }, (_, i) => {
        const x = 488 + i * 43.75;
        const y = 666 - i * 30.6;
        return (
          <g key={i}>
            <path d={`M${x} ${y}v44`} stroke="#5cbcbc" strokeWidth="3" />
            <path d={`M${x - 4} ${y + 32}h8l-4 14Z`} fill="#147878" />
          </g>
        );
      })}
      <g fill="none" stroke="#a4d8a4" strokeWidth="3">
        <path d="m1297 171-38 76h76ZM1259 265h76" />
        <path d="m644 628-38 78h77ZM660 706l-10 13M676 706l-10 13" />
      </g>
      <path d="M488 512v80" stroke="#b02228" strokeWidth="6" />
      <path d="M481 582h14l-7 27Z" fill="#b02228" />
      <g fill="#000">
        <circle cx="488" cy="737" r="10" />
        <circle cx="644" cy="628" r="10" />
        <circle cx="1297" cy="171" r="10" />
      </g>
      <Tag x={344} y={383} w={102} text="0,24" color="#b4282d" />
      <Tag x={493} y={513} w={102} text="2,14" color="#b4282d" />
      <Tag x={401} y={465} w={102} text="0,51" color="#b4282d" />
      <Tag x={1137} y={177} w={102} text="1,00" color="#2a9090" />
      <Tag x={950} y={378} w={38} text="2" color="#333" />
      <Tag x={547} y={660} w={38} text="1" color="#333" />
      <Tag x={537} y={692} w={102} text="0,56" color="#b4282d" />
      <g fontSize="36" textAnchor="middle" fill="#3c9e3c" fontFamily="Open Sans, sans-serif">
        <text x="1297" y="312">2</text>
        <text x="644" y="770">1</text>
      </g>
    </svg>
  );
}

/* ---------- document ---------- */

function Sym({ s, sub }: { s: string; sub?: string }) {
  return (
    <>
      {s}
      {sub && <span className="text-[9px]">{sub}</span>}
    </>
  );
}

const materialCols: { head: [string, string?][]; unit: string; values: string[]; w: string }[] = [
  { head: [['f', 'm,k'], ['f', 'v,k']], unit: 'N/mm²', values: ['24.00', '4.00'], w: 'w-[77px]' },
  { head: [['f', 't,0,k'], ['f', 'c,0,k']], unit: 'N/mm²', values: ['14.50', '21.00'], w: 'w-[77px]' },
  { head: [['f', 't,90,k'], ['f', 'c,90,k']], unit: 'N/mm²', values: ['0.40', '2.50'], w: 'w-[77px]' },
  { head: [['E', '0,mean'], ['E', '0,05']], unit: 'N/mm²', values: ['11000', '7400'], w: 'w-[77px]' },
  { head: [['E', '90,mean'], ['E', '90,05']], unit: 'N/mm²', values: ['370', '247'], w: 'w-[77px]' },
  { head: [['G', 'mean'], ['G', '05']], unit: 'N/mm²', values: ['690', '460'], w: 'w-[77px]' },
  { head: [['ρ', 'k'], ['ρ', 'm']], unit: 'kg/m³', values: ['350', '420'], w: 'w-[67px]' },
  { head: [['γ'], ['\u00a0']], unit: 'kN/m³', values: ['6.00', '\u00a0'], w: 'w-[70px]' },
];

const rafterHead: [string, string, string][] = [
  ['Feld', '', 'w-[145px]'],
  ['Länge Gfl', '[m]', 'w-[97px]'],
  ['Länge Dfl', '[m]', 'w-[97px]'],
  ['Seite', '', 'w-[57px]'],
  ['Neigung', '[°]', 'w-[87px]'],
  ['Querschnitt', '[cm]', 'w-[116px]'],
];

const rafters = [
  ['Kragarm unten', '1.00', '1.22', 'links', '35.0', '12.0/24.0'],
  ['1', '4.20', '5.13', 'links', '35.0', '12.0/24.0'],
  ['2', '3.80', '4.64', 'links', '35.0', '12.0/24.0'],
];

function Page() {
  return (
    <article className={clsx('flex w-[715px] shrink-0 flex-col border-x border-black bg-white text-[12px] leading-3 text-[#111]', roboto)}>
      <RoofDrawing />
      <div className="pt-[6px] pl-[56px]">
        <h3 className="font-bold text-[#444]">Material</h3>
        <h4 className="mt-[7px] font-bold">Materialwerte Holz</h4>
        <div className="mt-[7px] flex">
          <span className="w-[200px]">Nadelholz C24 gemäß EN 338:2016</span>
          <div className="grid auto-rows-[12px] grid-cols-[43px_16px_42px_82px_12px_16px_28px_60px] text-right">
            <span><Sym s="E" sub="0,mean" /></span><span className="pr-px">=</span><span>11000</span><span className="pl-[6px] text-left">N/mm²</span>
            <span className="text-left"><Sym s="ρ" sub="k" /></span><span className="pr-px">=</span><span>350</span><span className="pl-[6px] text-left">kg/m³</span>
            <span><Sym s="G" sub="mean" /></span><span className="pr-px">=</span><span>690</span><span className="pl-[6px] text-left">N/mm²</span>
          </div>
        </div>
        <h4 className="mt-[10px] font-bold">Materialkennwerte</h4>
        <table className="mt-[4px] ml-px w-[600px] table-fixed border-collapse border border-[#8c8c8c] text-right">
          <thead>
            <tr className="bg-[#ffcc99]">
              {materialCols.map((c, i) => (
                <th key={i} className={clsx('border border-[#8c8c8c] pt-1 pr-1 pb-[2px] pl-0 font-normal', c.w)}>
                  {c.head.map(([s, sub], k) => (
                    <div key={k} className="h-3"><Sym s={s} sub={sub} /></div>
                  ))}
                  <div className="h-3">{c.unit}</div>
                </th>
              ))}
            </tr>
          </thead>
          <tbody>
            <tr>
              {materialCols.map((c, i) => (
                <td key={i} className="border border-[#8c8c8c] pt-1 pr-1 pb-[2px] pl-0">
                  {c.values.map((v, k) => <div key={k}>{v}</div>)}
                </td>
              ))}
            </tr>
          </tbody>
        </table>
        <h3 className="mt-[6px] font-bold text-[#444]">Geometrie</h3>
        <div className="mt-[7px] grid grid-cols-[86px_47px_14px_39px_44px_86px_56px_14px_39px_40px] text-right whitespace-nowrap">
          <span className="text-left">Sparrenabstand</span><span>e</span><span>=</span><span>80.0</span><span className="pl-[6px] text-left">cm</span>
          <span className="text-left">Gesamt-Firsthöhe</span><span>h</span><span>=</span><span>6.00</span><span className="pl-[6px] text-left">m</span>
          <span className="text-left">Dachlänge</span><span>b,Roof</span><span>=</span><span>20.00</span><span className="pl-[6px] text-left">m</span>
          <span className="text-left">Gebäudelänge</span><span>b,Wall</span><span>=</span><span>20.00</span><span className="pl-[6px] text-left">m</span>
        </div>
        <h4 className="mt-[10px] font-bold">Sparren</h4>
        <table className="mt-[4px] ml-px w-[600px] table-fixed border-collapse border border-[#8c8c8c] text-left">
          <thead>
            <tr className="bg-[#ffcc99]">
              {rafterHead.map(([a, b, w]) => (
                <th key={a} className={clsx('border border-[#8c8c8c] px-[2px] pt-1 pb-[2px] align-top font-normal', w)}>
                  <div>{a}</div>
                  <div>{b || '\u00a0'}</div>
                </th>
              ))}
            </tr>
          </thead>
          <tbody>
            {rafters.map((r, i) => (
              <tr key={i}>
                {r.map((v, k) => (
                  <td key={k} className={clsx('border-x border-[#8c8c8c] px-[2px]', i === 0 ? 'pt-1' : 'pt-0', i === 2 ? 'pb-[2px]' : 'pb-0')}>
                    {v}
                  </td>
                ))}
              </tr>
            ))}
          </tbody>
        </table>
      </div>
    </article>
  );
}

function Viewer() {
  return (
    <div className="flex min-w-0 flex-1">
      <div className="flex w-[26px] shrink-0 flex-col items-center overflow-hidden pt-[18px] pb-[17px]">
        <VRuler />
      </div>
      <div className="flex min-w-0 flex-1 flex-col">
        <div className="my-1 flex h-[14px] shrink-0 justify-center pr-[18px]">
          <HRuler />
        </div>
        <div className="flex min-h-0 flex-1">
          <div className="flex min-w-0 flex-1 justify-center overflow-hidden bg-[#a0a0a0]">
            <div className="w-3 shrink-0 bg-linear-to-r from-[#a0a0a0] to-[#6c6c6c]" />
            <Page />
            <div className="w-[10px] shrink-0 bg-linear-to-r from-[#6c6c6c] to-[#a0a0a0]" />
          </div>
          <div className="flex w-[17px] shrink-0 flex-col items-center bg-[#f0f0f0] text-[#505050]">
            <Chevron dir="up" className="mt-[4px]" />
            <div className="mt-[157px] h-[62px] w-[15px] bg-[#cdcdcd]" />
            <Chevron dir="down" className="mt-auto mb-[3px]" />
          </div>
        </div>
        <div className="flex h-[17px] shrink-0 items-center justify-between pr-5 pl-[3px] text-[#bbb]">
          <Chevron dir="left" />
          <Chevron dir="right" />
        </div>
      </div>
    </div>
  );
}

/* ---------- bottom ---------- */

const bottomTabs = ['Auflager am linken Sparren', 'Standard-Lastfälle', 'Zusatz-Lastfälle'];

const TableIcon = () => (
  <svg width="15" height="14" viewBox="0 0 15 14" className="shrink-0">
    <path d="M.5.5h14v13H.5Z" fill="#f6f8fc" stroke="#8ca0c4" />
    <path d="M.5.5h14v3H.5Z" fill="#5c8cec" />
    <path d="M4.500 3v10M7.500 3v10M10.500 3v10M1 6.500h13M1 9.500h13" stroke="#b4bccc" />
  </svg>
);

function BottomTabs() {
  return (
    <div className={clsx('flex h-6 shrink-0 items-end bg-[#bbcde6] pl-[6px] text-[11px] whitespace-nowrap text-black', arial)}>
      {bottomTabs.map((t, i) => (
        <button
          key={t}
          className={clsx('flex h-[21px] items-center pl-[5px]', i === 0 ? 'mr-[8px] w-[174px] rounded-t-sm bg-[#f2f7fe]' : 'mr-[17px]')}
        >
          <TableIcon />
          <span className="ml-[9px]">{t}</span>
        </button>
      ))}
      <button aria-label="Schließen" className="mr-[4px] mb-[7px] ml-auto">
        <svg width="8" height="8" viewBox="0 0 8 8"><path d="m.5.5 7 7m0-7-7 7" stroke="#111" strokeWidth="1.500" /></svg>
      </button>
    </div>
  );
}

export default function App() {
  return (
    <div className="flex h-screen flex-col overflow-hidden bg-[#f0f0f0]">
      <TitleBar />
      <Ribbon />
      <div className="flex min-h-0 flex-1 border-b border-[#c4c4c4]">
        <Properties />
        <main className="ml-[3px] flex min-w-0 flex-1 flex-col">
          <div className={clsx('flex h-[23px] shrink-0 items-end bg-[#bbcde6] text-[11px] text-black', arial)}>
            <button className="h-5 w-[58px]">Grafik</button>
            <button className="h-5 w-[66px] rounded-t-sm bg-[#f2f7fe]">Dokument</button>
          </div>
          <Toolbar />
          <div className="flex min-h-0 flex-1 border-b border-[#d4d4d4]">
            <Contents />
            <Viewer />
          </div>
          <div className="flex h-6 shrink-0 items-center justify-end pr-[3px]">
            <svg width="10" height="10" viewBox="0 0 10 10" fill="#a0a0a0">
              <path d="M8 0h2v2H8ZM8 4h2v2H8ZM8 8h2v2H8ZM4 4h2v2H4ZM4 8h2v2H4ZM0 8h2v2H0Z" />
            </svg>
          </div>
          <BottomTabs />
        </main>
      </div>
      <footer className="h-[21px] shrink-0 bg-[#f3f2f1]" />
    </div>
  );
}
